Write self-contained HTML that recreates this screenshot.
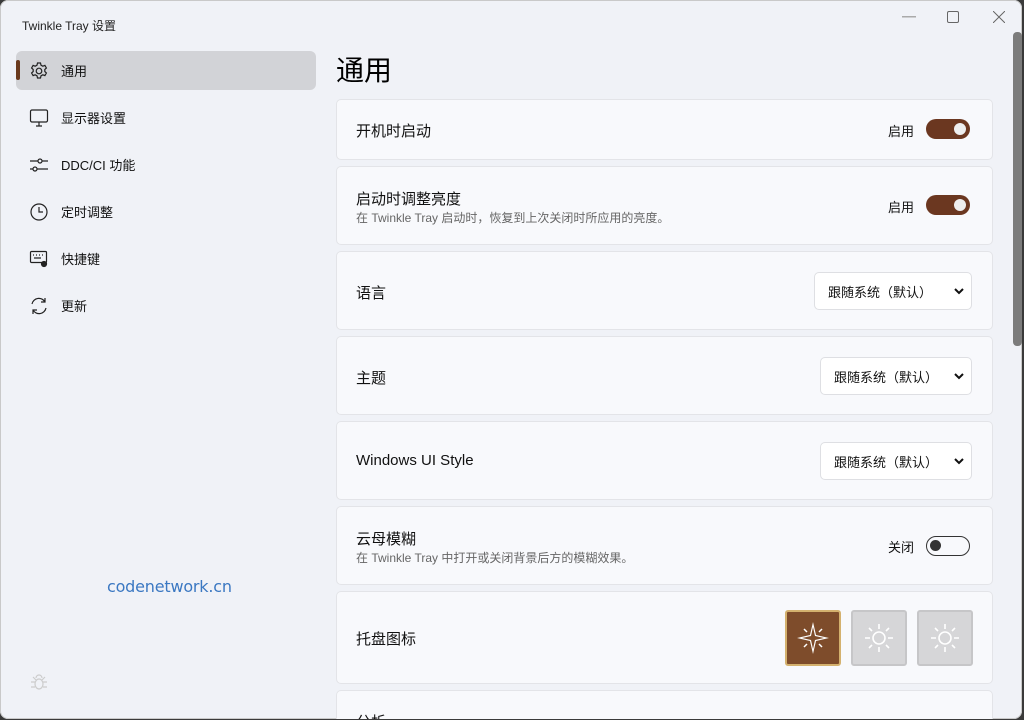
<!DOCTYPE html>
<html><head><meta charset="utf-8"><style>
*{box-sizing:border-box;margin:0;padding:0}
body{width:1024px;height:720px;overflow:hidden;background:#3a3a3a;font-family:"Liberation Sans","Noto Sans CJK SC",sans-serif;color:#111;position:relative}
.win{position:absolute;left:0;top:0;width:1022px;height:719px;background:#f0f2f7;border-radius:8px;box-shadow:inset 0 0 0 1px #c9c9c9;overflow:hidden}
.title{position:absolute;left:22px;top:17px;font-size:12px;color:#222}
.nav{position:absolute;left:16px;width:300px;height:39px;display:flex;align-items:center;font-size:13px;color:#111}
.nav.sel{background:#d2d3d7;border-radius:6px}
.nav.sel:before{content:"";position:absolute;left:0;top:9px;width:4px;height:20px;background:#6b3a1e;border-radius:2px}
.nav svg{position:absolute;left:13px;top:10px}
.nav span{position:absolute;left:45px}
h1{position:absolute;left:336px;top:49px;font-size:28px;font-weight:400;color:#000}
.card{position:absolute;left:336px;width:657px;background:#f8f9fc;border:1px solid #e3e4e8;border-radius:5px}
.lbl{position:absolute;left:19px;font-size:15px;color:#111}
.sub{position:absolute;left:19px;font-size:12px;color:#666}
.tg{position:absolute;right:22px;width:44px;height:20px;border-radius:10px;background:#6b3720}
.tg:after{content:"";position:absolute;right:4px;top:4px;width:12px;height:12px;border-radius:50%;background:#eee}
.tg.off{background:#f8f9fc;border:1.5px solid #333}
.tg.off:after{left:3px;top:3px;right:auto;width:11px;height:11px;background:#333}
.tt{position:absolute;right:78px;font-size:13px}
.sel2{position:absolute;right:20px;width:152px;height:38px;background:#fff;border:1px solid #dedfe3;border-radius:5px;font-size:13px;padding:9px 0 0 13px}
.sel2 svg{position:absolute;right:7px;top:15px}
.ib{position:absolute;top:18px;width:56px;height:56px;border-radius:3px;background:#d6d6d8;border:2px solid #c6c6c8}
</style></head><body>
<div class="win">
<div class="title">Twinkle Tray 设置</div>
<svg style="position:absolute;left:902px;top:16px" width="14" height="2"><rect width="14" height="1.5" fill="#aaa"/></svg>
<svg style="position:absolute;left:947px;top:11px" width="12" height="12"><rect x=".5" y=".5" width="11" height="11" rx="1.5" fill="none" stroke="#666"/></svg>
<svg style="position:absolute;left:993px;top:11px" width="12" height="12"><path d="M0 0L12 12M12 0L0 12" stroke="#666"/></svg>
<div style="position:absolute;left:1013px;top:32px;width:9px;height:314px;background:#7c7c7c;border-radius:4px"></div>

<div class="nav sel" style="top:51px"><svg width="20" height="20" viewBox="0 0 20 20" fill="none" stroke="#222" stroke-width="1.2"><circle cx="10" cy="10" r="2.8"/><path d="M8.5 2h3l.5 2.2 1.8 1 2.1-.8 1.5 2.6-1.6 1.5v2l1.6 1.5-1.5 2.6-2.1-.8-1.8 1-.5 2.2h-3l-.5-2.2-1.8-1-2.1.8-1.5-2.6 1.6-1.5v-2L2.6 7l1.5-2.6 2.1.8 1.8-1z"/></svg><span>通用</span></div>
<div class="nav" style="top:98px"><svg width="20" height="20" viewBox="0 0 20 20" fill="none" stroke="#222" stroke-width="1.2"><rect x="1.5" y="2" width="17" height="12" rx="1.5"/><path d="M7 18h6M10 14v4"/></svg><span>显示器设置</span></div>
<div class="nav" style="top:145px"><svg width="20" height="20" viewBox="0 0 20 20" fill="none" stroke="#222" stroke-width="1.2"><path d="M1 6h8M13 6h6M1 14h3M8 14h11"/><circle cx="11" cy="6" r="2"/><circle cx="6" cy="14" r="2"/></svg><span>DDC/CI 功能</span></div>
<div class="nav" style="top:192px"><svg width="20" height="20" viewBox="0 0 20 20" fill="none" stroke="#222" stroke-width="1.2"><circle cx="10" cy="10" r="8"/><path d="M10 5v5h4"/></svg><span>定时调整</span></div>
<div class="nav" style="top:239px"><svg width="20" height="20" viewBox="0 0 20 20" fill="none" stroke="#222" stroke-width="1.2"><rect x="1.5" y="2.5" width="16" height="11" rx="1"/><path d="M4 6h1M7 6h1M10 6h1M13 6h1M5 9h7" /><circle cx="15" cy="15" r="2.5" fill="#222"/></svg><span>快捷键</span></div>
<div class="nav" style="top:286px"><svg width="20" height="20" viewBox="0 0 20 20" fill="none" stroke="#222" stroke-width="1.2"><path d="M3 8a7 7 0 0 1 13-2M17 12a7 7 0 0 1-13 2M16 2v4h-4M4 18v-4h4"/></svg><span>更新</span></div>

<div style="position:absolute;left:107px;top:577px;font-size:16px;color:#3b78c2;font-family:'DejaVu Sans',sans-serif;letter-spacing:-0.2px">codenetwork.cn</div>
<svg style="position:absolute;left:30px;top:673px" width="18" height="18" viewBox="0 0 18 18" fill="none" stroke="#ccc" stroke-width="1.2"><ellipse cx="9" cy="11" rx="4" ry="5"/><path d="M6 5a3 3 0 0 1 6 0M1 9h4M13 9h4M1 14h4M13 14h4M3 4l3 3M15 4l-3 3"/></svg>

<h1>通用</h1>

<div class="card" style="top:99px;height:61px"><div class="lbl" style="top:20px">开机时启动</div><div class="tt" style="top:21px">启用</div><div class="tg" style="top:19px"></div></div>
<div class="card" style="top:166px;height:79px"><div class="lbl" style="top:21px">启动时调整亮度</div><div class="sub" style="top:42px">在 Twinkle Tray 启动时，恢复到上次关闭时所应用的亮度。</div><div class="tt" style="top:30px">启用</div><div class="tg" style="top:28px"></div></div>
<div class="card" style="top:251px;height:79px"><div class="lbl" style="top:30px">语言</div><div class="sel2" style="top:20px;width:158px">跟随系统（默认）<svg width="10" height="7" viewBox="0 0 10 7"><path d="M1 1l4 4 4-4" fill="none" stroke="#111" stroke-width="2"/></svg></div></div>
<div class="card" style="top:336px;height:79px"><div class="lbl" style="top:30px">主题</div><div class="sel2" style="top:20px">跟随系统（默认）<svg width="10" height="7" viewBox="0 0 10 7"><path d="M1 1l4 4 4-4" fill="none" stroke="#111" stroke-width="2"/></svg></div></div>
<div class="card" style="top:421px;height:79px"><div class="lbl" style="top:30px">Windows UI Style</div><div class="sel2" style="top:20px">跟随系统（默认）<svg width="10" height="7" viewBox="0 0 10 7"><path d="M1 1l4 4 4-4" fill="none" stroke="#111" stroke-width="2"/></svg></div></div>
<div class="card" style="top:506px;height:79px"><div class="lbl" style="top:21px">云母模糊</div><div class="sub" style="top:42px">在 Twinkle Tray 中打开或关闭背景后方的模糊效果。</div><div class="tt" style="top:30px">关闭</div><div class="tg off" style="top:29px"></div></div>
<div class="card" style="top:591px;height:93px"><div class="lbl" style="top:36px">托盘图标</div>
<div class="ib" style="left:448px;background:#7e4c2b;border-color:#d4b16e"><svg width="52" height="52" viewBox="0 0 52 52"><path d="M26 10L29 23 42 26 29 29 26 42 23 29 10 26 23 23z" fill="#fff"/><path d="M26 15L28 24 37 26 28 28 26 37 24 28 15 26 24 24z" fill="#7e4c2b"/><path d="M17 17l3 3M35 17l-3 3M17 35l3-3M35 35l-3-3" stroke="#fff" stroke-width="1.5"/></svg></div>
<div class="ib" style="left:514px"><svg width="52" height="52" viewBox="0 0 52 52" fill="none" stroke="#fff" stroke-width="1.6"><circle cx="26" cy="26" r="6"/><path d="M26 12v5M26 35v5M12 26h5M35 26h5M16 16l3 3M36 16l-3 3M16 36l3-3M36 36l-3-3"/></svg></div>
<div class="ib" style="left:580px"><svg width="52" height="52" viewBox="0 0 52 52" fill="none" stroke="#fff" stroke-width="1.6"><circle cx="26" cy="26" r="6"/><path d="M26 12v5M26 35v5M12 26h5M35 26h5M16 16l3 3M36 16l-3 3M16 36l3-3M36 36l-3-3"/></svg></div>
</div>
<div class="card" style="top:690px;height:60px"><div class="lbl" style="top:20px">分析</div></div>
</div>
</body></html>
